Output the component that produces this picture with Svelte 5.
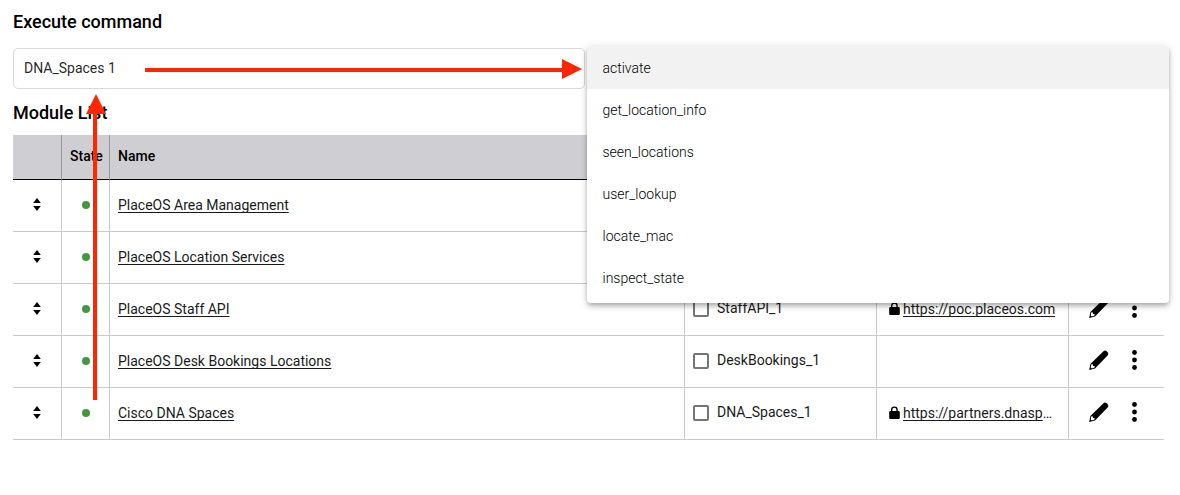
<script>
  const commands = [
    'activate',
    'get_location_info',
    'seen_locations',
    'user_lookup',
    'locate_mac',
    'inspect_state'
  ];

  const modules = [
    { name: 'PlaceOS Area Management' },
    { name: 'PlaceOS Location Services' },
    { name: 'PlaceOS Staff API', device: 'StaffAPI_1', uri: 'https://poc.placeos.com' },
    { name: 'PlaceOS Desk Bookings Locations', device: 'DeskBookings_1' },
    { name: 'Cisco DNA Spaces', device: 'DNA_Spaces_1', uri: 'https://partners.dnaspaces.io' }
  ];

  let active = $state('activate');
</script>

<main>
  <h2>Execute command</h2>
  <div class="fields">
    <div class="field">
      <select aria-label="Module">
        <option>DNA_Spaces 1</option>
      </select>
      <svg class="caret" viewBox="0 0 10 5" aria-hidden="true"><path d="M0 0h10L5 5z" /></svg>
    </div>
    <div class="field">
      <div class="menu" role="listbox" aria-label="Command">
        {#each commands as command}
          <button
            type="button"
            role="option"
            aria-selected={active === command}
            class:active={active === command}
            onclick={() => (active = command)}>{command}</button>
        {/each}
      </div>
    </div>
  </div>

  <h2>Module List</h2>
  <table>
    <colgroup>
      <col class="c-sort" /><col class="c-state" /><col /><col class="c-device" /><col class="c-uri" /><col class="c-actions" />
    </colgroup>
    <thead>
      <tr><th></th><th>State</th><th>Name</th><th></th><th></th><th></th></tr>
    </thead>
    <tbody>
      {#each modules as module}
        <tr>
          <td class="center">
            <button type="button" class="sort" aria-label="Reorder">
              <svg width="8" height="14" viewBox="0 0 8 14"><path d="M4 0L7.8 5H0.2zM4 13L0.2 8h7.6z" /></svg>
            </button>
          </td>
          <td class="center"><span class="dot"></span></td>
          <td><a href="#module">{module.name}</a></td>
          <td>
            {#if module.device}
              <label><input type="checkbox" /><span>{module.device}</span></label>
            {/if}
          </td>
          <td>
            {#if module.uri}
              <div class="uri">
                <svg width="11" height="14" viewBox="0 0 11 14" aria-hidden="true">
                  <path d="M1.4 5H2V3.8a3.4 3.4 0 0 1 6.8 0V5h.8Q10.8 5 10.8 6.2v5.6Q10.8 13 9.6 13H1.4Q.2 13 .2 11.8V6.2Q.2 5 1.4 5zM3.4 5h4V3.8a2 2 0 0 0-4 0z" />
                </svg>
                <div class="clip"><a href="#uri">{module.uri}</a></div>
              </div>
            {/if}
          </td>
          <td>
            <div class="actions">
              <button type="button" aria-label="Edit">
                <svg width="20" height="20" viewBox="0 0 20 20">
                  <path d="M0.2 19.9L1.4 14L14.2 1.4Q15.9-.2 17.5 1.1L18.6 2.2Q20 3.8 18.6 5.5L6 18.4z" />
                  <path class="tip" d="M2.3 14.4L3.3 13.7L4 15.7L6.3 16.7L5.4 17.6L2.9 18.5L1.7 17.4z" />
                </svg>
              </button>
              <button type="button" aria-label="More">
                <svg width="20" height="20" viewBox="0 0 20 20">
                  <circle cx="9.5" cy="2.5" r="2.4" /><circle cx="9.5" cy="10" r="2.4" /><circle cx="9.5" cy="17.5" r="2.4" />
                </svg>
              </button>
            </div>
          </td>
        </tr>
      {/each}
    </tbody>
  </table>

  <svg class="arrow across" width="438" height="20" viewBox="0 0 438 20" aria-hidden="true">
    <path d="M0 9h418v4H0zM417 0l20 10-20 10z" />
  </svg>
  <svg class="arrow up" width="20" height="306" viewBox="0 0 20 306" aria-hidden="true">
    <path d="M7 18h4v288H7zM10 0l10 20H0z" />
  </svg>
</main>

<style>
  :global(body) {
    margin: 0;
    background: #fff;
  }
  main {
    position: relative;
    padding: 10px 16px 16px 13px;
    font-family: Roboto, sans-serif;
    font-size: 14px;
    color: #000;
  }
  h2 {
    margin: 0;
    font-size: 18px;
    font-weight: 500;
    line-height: 24px;
  }
  .fields {
    display: flex;
    gap: 8px;
    margin: 14px 0 12px;
  }
  .field {
    position: relative;
    flex: 1;
    height: 41px;
  }
  select {
    box-sizing: border-box;
    width: 100%;
    height: 100%;
    padding: 0 10px 2px;
    border: 1px solid #d9d9d9;
    border-radius: 5px;
    background: #fff;
    color: rgba(0, 0, 0, 0.87);
    font: inherit;
    appearance: none;
  }
  .caret {
    position: absolute;
    right: 14px;
    top: 17px;
    width: 10px;
    height: 5px;
    fill: #757575;
  }
  .menu {
    position: absolute;
    z-index: 2;
    top: -2px;
    left: -6px;
    right: -5px;
    display: flex;
    flex-direction: column;
    padding-bottom: 4px;
    border-radius: 4px;
    overflow: hidden;
    background: #fff;
    box-shadow:
      0 2px 4px -1px rgba(0, 0, 0, 0.2),
      0 4px 5px 0 rgba(0, 0, 0, 0.14),
      0 1px 10px 0 rgba(0, 0, 0, 0.12);
  }
  .menu button {
    height: 42px;
    padding: 0 16px;
    color: #000;
    font-weight: 300;
    text-align: left;
  }
  .menu button.active {
    height: 43px;
    background: #f2f2f2;
  }
  button {
    padding: 0;
    border: 0;
    background: none;
    font: inherit;
    cursor: pointer;
  }
  button svg {
    display: block;
  }
  table {
    width: 100%;
    margin-top: 10px;
    border-collapse: separate;
    border-spacing: 0;
    table-layout: fixed;
  }
  .c-sort {
    width: 49px;
  }
  .c-state {
    width: 48px;
  }
  .c-device,
  .c-uri {
    width: 192px;
  }
  .c-actions {
    width: 95px;
  }
  th,
  td {
    box-sizing: border-box;
    padding: 0 8px 2px;
    border-right: 1px solid #c9c9cc;
    border-bottom: 1px solid #c9c9cc;
    text-align: left;
  }
  th {
    height: 45px;
    border-right-color: #98989d;
    border-bottom-color: #000;
    background: #cfced3;
    font-weight: 500;
  }
  td {
    height: 52px;
    color: #1a1a1a;
  }
  th:last-child,
  td:last-child {
    border-right: 0;
  }
  .center {
    padding-bottom: 4px;
    text-align: center;
  }
  .sort {
    display: inline-block;
    vertical-align: middle;
  }
  .dot {
    display: inline-block;
    width: 8px;
    height: 8px;
    border-radius: 50%;
    background: #43983f;
    vertical-align: middle;
  }
  a {
    color: inherit;
    text-underline-offset: 2px;
    text-decoration-skip-ink: none;
  }
  label {
    display: flex;
    align-items: center;
    gap: 8px;
  }
  label span {
    padding-bottom: 2px;
  }
  input {
    width: 16px;
    height: 16px;
    margin: 0;
    border: 2px solid #757575;
    border-radius: 2px;
    appearance: none;
    box-sizing: border-box;
  }
  .uri {
    display: flex;
    align-items: center;
    gap: 3px;
    padding: 0 4px;
  }
  .uri svg {
    flex: none;
  }
  .clip {
    overflow: hidden;
    text-overflow: ellipsis;
    white-space: nowrap;
  }
  .actions {
    display: flex;
    gap: 16px;
    padding: 0 0 1px 12px;
  }
  .tip {
    fill: #fff;
  }
  .arrow {
    position: absolute;
    z-index: 3;
    fill: #ff2600;
    pointer-events: none;
  }
  .across {
    left: 145px;
    top: 59px;
  }
  .up {
    left: 86px;
    top: 94px;
  }
</style>
